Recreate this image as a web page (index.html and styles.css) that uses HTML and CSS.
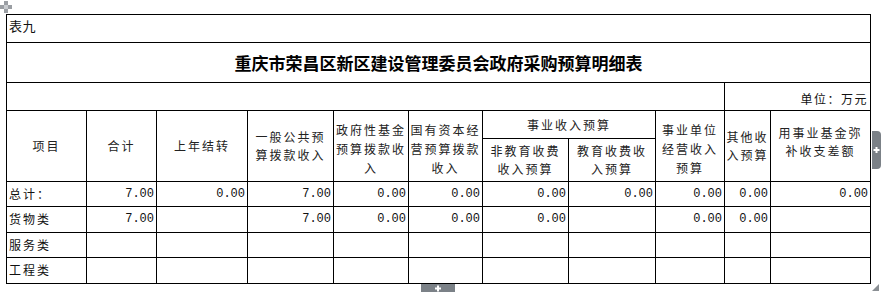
FILE: index.html
```html
<!DOCTYPE html>
<html lang="zh-CN">
<head>
<meta charset="utf-8">
<title>政府采购预算明细表</title>
<link rel="stylesheet" href="styles.css">
</head>
<body>
<div class="page">
  <svg class="move-icon" width="13" height="13" viewBox="0 0 13 13" aria-hidden="true">
    <rect x="4" y="0" width="4" height="4" fill="#9a9ea3"/>
    <rect x="0" y="4" width="4" height="4" fill="#9a9ea3"/>
    <rect x="8" y="4" width="4" height="4" fill="#9a9ea3"/>
    <rect x="4" y="8" width="4" height="4" fill="#9a9ea3"/>
    <rect x="4" y="4" width="4" height="4" fill="#c8cbcf"/>
  </svg>
  <table class="sheet">
    <colgroup>
      <col class="c1"><col class="c2"><col class="c3"><col class="c4"><col class="c5"><col class="c6">
      <col class="c7"><col class="c8"><col class="c9"><col class="c10"><col class="c11">
    </colgroup>
    <tr class="r-label">
      <td colspan="11" class="label">表九</td>
    </tr>
    <tr class="r-title">
      <td colspan="11" class="title">重庆市荣昌区新区建设管理委员会政府采购预算明细表</td>
    </tr>
    <tr class="r-unit">
      <td colspan="9"></td>
      <td colspan="2" class="unit">单位：万元</td>
    </tr>
    <tr class="r-h1">
      <td rowspan="2" class="hd">项目</td>
      <td rowspan="2" class="hd">合计</td>
      <td rowspan="2" class="hd">上年结转</td>
      <td rowspan="2" class="hd">一般公共预<br>算拨款收入</td>
      <td rowspan="2" class="hd hd-top">政府性基金<br>预算拨款收<br>入</td>
      <td rowspan="2" class="hd hd-top">国有资本经<br>营预算拨款<br>收入</td>
      <td colspan="2" class="hd">事业收入预算</td>
      <td rowspan="2" class="hd hd-top">事业单位<br>经营收入<br>预算</td>
      <td rowspan="2" class="hd">其他收<br>入预算</td>
      <td rowspan="2" class="hd hd-top2">用事业基金弥<br>补收支差额</td>
    </tr>
    <tr class="r-h2">
      <td class="hd">非教育收费<br>收入预算</td>
      <td class="hd">教育收费收<br>入预算</td>
    </tr>
    <tr class="r-data">
      <td class="name">总计：</td>
      <td class="num">7.00</td>
      <td class="num">0.00</td>
      <td class="num">7.00</td>
      <td class="num">0.00</td>
      <td class="num">0.00</td>
      <td class="num">0.00</td>
      <td class="num">0.00</td>
      <td class="num">0.00</td>
      <td class="num">0.00</td>
      <td class="num">0.00</td>
    </tr>
    <tr class="r-data r-b">
      <td class="name">货物类</td>
      <td class="num">7.00</td>
      <td class="num"></td>
      <td class="num">7.00</td>
      <td class="num">0.00</td>
      <td class="num">0.00</td>
      <td class="num">0.00</td>
      <td class="num"></td>
      <td class="num">0.00</td>
      <td class="num">0.00</td>
      <td class="num"></td>
    </tr>
    <tr class="r-data">
      <td class="name">服务类</td>
      <td></td><td></td><td></td><td></td><td></td><td></td><td></td><td></td><td></td><td></td>
    </tr>
    <tr class="r-data r-b">
      <td class="name">工程类</td>
      <td></td><td></td><td></td><td></td><td></td><td></td><td></td><td></td><td></td><td></td>
    </tr>
  </table>
  <div class="tab-right" aria-hidden="true">
    <svg width="9" height="38" viewBox="0 0 9 38"><path d="M1.5 19h6M4.5 16v6" stroke="#fff" stroke-width="2"/></svg>
  </div>
  <div class="tab-bottom" aria-hidden="true">
    <svg width="34" height="9" viewBox="0 0 34 9"><path d="M14 4.5h6M17 1.5v6" stroke="#fff" stroke-width="2"/></svg>
  </div>
  <div class="resize-corner" aria-hidden="true"></div>
</div>
</body>
</html>
```

FILE: styles.css
```css
html, body {
  margin: 0;
  padding: 0;
  background: #ffffff;
}

body {
  font-family: "Noto Sans CJK SC", "DejaVu Sans", sans-serif;
  color: #111;
}

.page {
  position: relative;
  width: 887px;
  height: 292px;
  overflow: hidden;
}

.move-icon {
  position: absolute;
  left: 0;
  top: 1px;
}

.sheet {
  margin: 14px 0 0 6px;
  border-collapse: collapse;
  table-layout: fixed;
  width: 865px;
}

.sheet td {
  border: 1px solid #000;
  padding: 0 1px;
  font-size: 12px;
  line-height: 18px;
  letter-spacing: 2px;
  white-space: nowrap;
  overflow: hidden;
}

.c1 { width: 80px; }
.c2 { width: 70px; }
.c3 { width: 91px; }
.c4 { width: 86px; }
.c5 { width: 75px; }
.c6 { width: 74px; }
.c7 { width: 86px; }
.c8 { width: 87px; }
.c9 { width: 69px; }
.c10 { width: 46px; }
.c11 { width: 100px; }

.r-label { height: 28px; }
.r-title { height: 40px; }
.r-unit { height: 28px; }
.r-h1 { height: 28px; }
.r-h2 { height: 43px; }
.r-data { height: 25px; }
.r-data.r-b { height: 26px; }

.sheet td.label {
  vertical-align: top;
  padding: 2px 2px 0;
  font-size: 13px;
  letter-spacing: 0.5px;
}

.sheet td.title {
  text-align: center;
  font-size: 17px;
  font-weight: 700;
  letter-spacing: 0;
  line-height: 24px;
  color: #000;
}

.sheet td.unit {
  text-align: right;
  vertical-align: bottom;
  padding: 0 2px 2px 0;
  letter-spacing: 1.5px;
}

.sheet td.hd {
  text-align: center;
  vertical-align: middle;
  color: #222;
}

.sheet td.hd-top {
  padding-top: 4px;
  line-height: 19px;
}

.sheet td.hd-top2 {
  padding-bottom: 8px;
}

.sheet td.name {
  vertical-align: top;
  padding: 3px 2px 0;
  text-align: left;
}

.sheet td.num {
  vertical-align: top;
  padding: 3px 2px 0 0;
  text-align: right;
  font-family: "Liberation Mono", "DejaVu Sans Mono", monospace;
  letter-spacing: 0;
}

.tab-right {
  position: absolute;
  left: 872px;
  top: 131px;
  width: 9px;
  height: 38px;
  background: #7b8187;
  border-radius: 0 4px 4px 0;
}

.tab-right svg,
.tab-bottom svg {
  display: block;
}

.tab-bottom {
  position: absolute;
  left: 421px;
  top: 284px;
  width: 34px;
  height: 9px;
  background: #7b8187;
}

.resize-corner {
  position: absolute;
  left: 872px;
  top: 284px;
  width: 0;
  height: 0;
  border-left: 7px solid transparent;
  border-bottom: 7px solid #8a8f94;
}
```
